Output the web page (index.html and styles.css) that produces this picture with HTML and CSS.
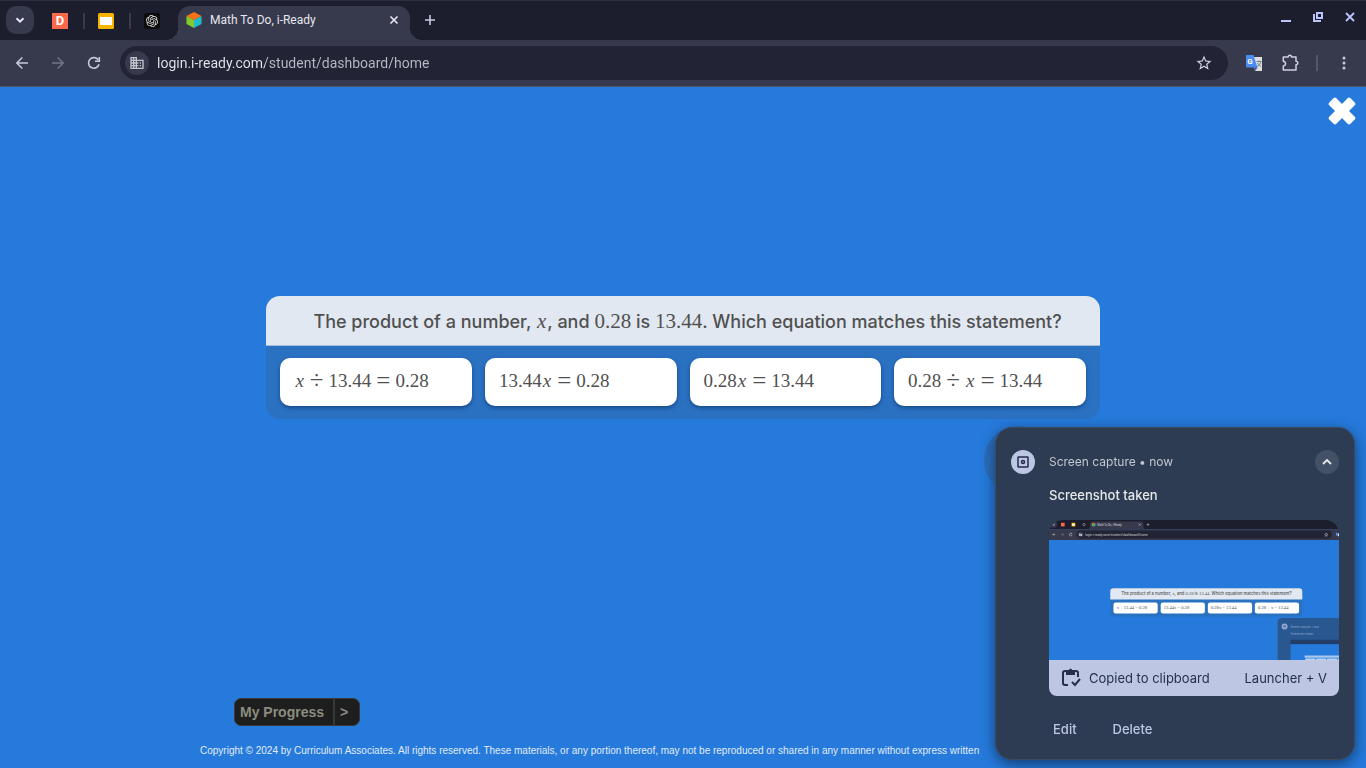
FILE: index.html
```html
<!DOCTYPE html>
<html lang="en">
<head>
<meta charset="utf-8">
<title>Math To Do, i-Ready</title>
<link rel="stylesheet" href="styles.css">
</head>
<body>
<header class="browser">
  <div class="tabstrip">
    <button class="tab-search" aria-label="Search tabs"><svg width="12" height="12" viewBox="0 0 12 12" fill="none" stroke="#e4e5f5" stroke-width="2"><path d="M2.500 4.200 6 7.700l3.500-3.500"/></svg></button>
    <div class="pinned-tabs">
      <button class="pinned" aria-label="Pinned tab D"><span class="icon-d">D</span></button>
      <button class="pinned" aria-label="Slides"><svg width="16" height="16" viewBox="0 0 16 16"><rect width="16" height="16" rx="1.500" fill="#f5b400"/><rect x="2" y="4" width="12" height="8" fill="#fff"/></svg></button>
      <button class="pinned" aria-label="Chat"><svg width="16" height="16" viewBox="-4 -4 32 32"><rect x="-4" y="-4" width="32" height="32" rx="6" fill="#0c0c0e"/><path fill="#e8e8e8" d="M22.2819 9.8211a5.9847 5.9847 0 0 0-.5157-4.9108 6.0462 6.0462 0 0 0-6.5098-2.9A6.0651 6.0651 0 0 0 4.9807 4.1818a5.9847 5.9847 0 0 0-3.9977 2.9 6.0462 6.0462 0 0 0 .7427 7.0966 5.98 5.98 0 0 0 .511 4.9107 6.051 6.051 0 0 0 6.5146 2.9001A5.9847 5.9847 0 0 0 13.2599 24a6.0557 6.0557 0 0 0 5.7718-4.2058 5.9894 5.9894 0 0 0 3.9977-2.9001 6.0557 6.0557 0 0 0-.7475-7.0729zm-9.022 12.6081a4.4755 4.4755 0 0 1-2.8764-1.0408l.1419-.0804 4.7783-2.7582a.7948.7948 0 0 0 .3927-.6813v-6.7369l2.02 1.1686a.071.071 0 0 1 .038.052v5.5826a4.504 4.504 0 0 1-4.4945 4.4944zm-9.6607-4.1254a4.4708 4.4708 0 0 1-.5346-3.0137l.142.0852 4.783 2.7582a.7712.7712 0 0 0 .7806 0l5.8428-3.3685v2.3324a.0804.0804 0 0 1-.0332.0615L9.74 19.9502a4.4992 4.4992 0 0 1-6.1408-1.6464zM2.3408 7.8956a4.485 4.485 0 0 1 2.3655-1.9728V11.6a.7664.7664 0 0 0 .3879.6765l5.8144 3.3543-2.0201 1.1685a.0757.0757 0 0 1-.071 0l-4.8303-2.7865A4.504 4.504 0 0 1 2.3408 7.872zm16.5963 3.8558L13.1038 8.364 15.1192 7.2a.0757.0757 0 0 1 .071 0l4.8303 2.7913a4.4944 4.4944 0 0 1-.6765 8.1042v-5.6772a.79.79 0 0 0-.407-.667zm2.0107-3.0231l-.142-.0852-4.7735-2.7818a.7759.7759 0 0 0-.7854 0L9.409 9.2297V6.8974a.0662.0662 0 0 1 .0284-.0615l4.8303-2.7866a4.4992 4.4992 0 0 1 6.6802 4.66zM8.3065 12.863l-2.02-1.1638a.0804.0804 0 0 1-.038-.0567V6.0742a4.4992 4.4992 0 0 1 7.3757-3.4537l-.142.0805L8.704 5.459a.7948.7948 0 0 0-.3927.6813zm1.0976-2.3654l2.602-1.4998 2.6069 1.4998v2.9994l-2.5974 1.4997-2.6067-1.4997Z"/></svg></button>
    </div>
    <div class="tab">
      <svg width="16" height="16" viewBox="0 0 16 16"><path d="M8 0l7.500 4L8 8.200.500 4z" fill="#f97316"/><path d="M.500 4 8 8.200V16L.500 12z" fill="#84cc2c"/><path d="M15.500 4 8 8.200V16l7.500-4z" fill="#1cbccb"/></svg>
      <span class="tab-title">Math To Do, i-Ready</span>
      <button class="tab-close" aria-label="Close tab"><svg width="16" height="16" viewBox="0 0 16 16" stroke="#e4e5f0" stroke-width="1.700"><path d="m4.500 4.500 7 7m0-7-7 7"/></svg></button>
    </div>
    <button class="new-tab" aria-label="New tab"><svg width="12" height="12" viewBox="0 0 12 12" stroke="#c8cae0" stroke-width="1.600"><path d="M6 1v10M1 6h10"/></svg></button>
    <div class="window-controls">
      <button aria-label="Minimize"><svg width="16" height="16" viewBox="0 0 16 16"><path fill="#bcc5fb" d="M3 11h10v2H3z"/></svg></button>
      <button aria-label="Restore"><svg width="16" height="16" viewBox="0 0 16 16" fill="none" stroke="#bcc5fb" stroke-width="2"><path d="M7 4h5v5H7zM4 5v7h7"/></svg></button>
      <button aria-label="Close"><svg width="16" height="16" viewBox="0 0 16 16" stroke="#bcc5fb" stroke-width="1.800"><path d="m4 4 8 8m0-8-8 8"/></svg></button>
    </div>
  </div>
  <div class="toolbar">
    <nav class="nav-buttons">
      <button aria-label="Back"><svg width="16" height="16" viewBox="0 0 16 16" fill="none" stroke="#c8cae0" stroke-width="1.500"><path d="M14 8H3m5.300-5.500L2.800 8l5.500 5.500"/></svg></button>
      <button aria-label="Forward"><svg width="16" height="16" viewBox="0 0 16 16" fill="none" stroke="#71758a" stroke-width="1.500"><path d="M2 8h11M7.700 2.500 13.200 8l-5.500 5.500"/></svg></button>
      <button aria-label="Reload"><svg width="16" height="16" viewBox="0 0 16 16" fill="none" stroke="#c8cae0" stroke-width="1.600"><path d="M13 9.200A5.300 5.300 0 1 1 12.300 5"/><path d="M13.300 2v4.200H9"/></svg></button>
    </nav>
    <div class="omnibox">
      <button class="site-info" aria-label="Site information"><svg width="16" height="16" viewBox="0 0 24 24" fill="#c3c4cc"><path d="M12 7V3H2v18h20V7H12zM6 19H4v-2h2v2zm0-4H4v-2h2v2zm0-4H4V9h2v2zm0-4H4V5h2v2zm4 12H8v-2h2v2zm0-4H8v-2h2v2zm0-4H8V9h2v2zm0-4H8V5h2v2zm10 12h-8v-2h2v-2h-2v-2h2v-2h-2V9h8v10zm-2-8h-2v2h2v-2zm0 4h-2v2h2v-2z"/></svg></button>
      <input class="address" type="text" aria-label="Address" value="login.i-ready.com/student/dashboard/home">
      <button class="bookmark" aria-label="Bookmark this tab"><svg width="18" height="18" viewBox="0 0 24 24" fill="#cfd0dc"><path d="m22 9.240-7.190-.620L12 2 9.190 8.630 2 9.240l5.460 4.730L5.820 21 12 17.270 18.180 21l-1.630-7.030L22 9.240zM12 15.400l-3.760 2.270 1-4.280-3.320-2.880 4.380-.380L12 6.100l1.710 4.040 4.380.380-3.320 2.880 1 4.280L12 15.400z"/></svg></button>
    </div>
    <div class="extensions">
      <button aria-label="Translate"><svg width="18" height="18" viewBox="0 0 18 18"><path d="M8 3h9v14h-7z" fill="#dfe0dc"/><path d="M11.500 7.500h5m-2.500-1v1m1.800 0c-.5 2.500-2 4-3.800 5m.500-3.500c1 1.500 2 2.500 3.500 3.500" stroke="#69818a" fill="none"/><path d="m9.500 13 3 0-2 4z" fill="#3155c8"/><path d="M1 1h7.500l4 12.500H2a1 1 0 0 1-1-1z" fill="#4b8af0"/><text x="2.300" y="10.300" class="icon-g">G</text></svg></button>
      <button aria-label="Extensions"><svg width="20" height="20" viewBox="0 0 20 20" fill="none" stroke="#cfd0e4" stroke-width="1.500" stroke-linejoin="round"><path d="M4 4h4.200c0-2.500 3.300-2.500 3.300 0H16v4.300c2.500.200 2.500 3.400 0 3.500V17H3.300v-4c3-.300 3-4.500 0-4.800V4z"/></svg></button>
      <span class="divider"></span>
      <button aria-label="Menu"><svg width="16" height="16" viewBox="0 0 16 16" fill="#c8cae0"><circle cx="8" cy="3" r="1.500"/><circle cx="8" cy="8" r="1.500"/><circle cx="8" cy="13" r="1.500"/></svg></button>
    </div>
  </div>
</header>

<main class="lesson">
  <button class="lesson-close" aria-label="Close lesson"><svg width="28" height="28" viewBox="-14 -14 28 28" fill="#fff"><rect x="-15" y="-5" width="30" height="10" rx="2" transform="rotate(45)"/><rect x="-15" y="-5" width="30" height="10" rx="2" transform="rotate(-45)"/></svg></button>
  <section class="question">
    <h1 class="prompt">The product of a number, <i class="math">x</i>, and <span class="math">0.28</span> is <span class="math">13.44</span>. Which equation matches this statement?</h1>
    <div class="answers">
      <button class="answer"><i>x</i><span class="op">÷</span>13.44<span class="op">=</span>0.28</button>
      <button class="answer">13.44<i>x</i><span class="op">=</span>0.28</button>
      <button class="answer">0.28<i>x</i><span class="op">=</span>13.44</button>
      <button class="answer">0.28<span class="op">÷</span><i>x</i><span class="op">=</span>13.44</button>
    </div>
  </section>
  <footer class="lesson-footer">
    <button class="progress"><span class="progress-label">My Progress</span><span class="progress-arrow">&gt;</span></button>
    <p class="copyright">Copyright © 2024 by Curriculum Associates. All rights reserved. These materials, or any portion thereof, may not be reproduced or shared in any manner without express written</p>
  </footer>
</main>

<aside class="notification">
  <div class="notice-head">
    <span class="app-icon"><svg width="14" height="14" viewBox="0 0 14 14" fill="none" stroke="#232c49" stroke-width="1.500"><rect x="2" y="2" width="10" height="10" rx=".500"/><circle cx="7" cy="7" r="1.500"/></svg></span>
    <span class="source">Screen capture • now</span>
    <button class="collapse" aria-label="Collapse"><svg width="12" height="12" viewBox="0 0 12 12" fill="none" stroke="#e8eaf2" stroke-width="1.800"><path d="M2 8l4-4 4 4"/></svg></button>
  </div>
  <div class="notice-body">
    <h2 class="notice-title">Screenshot taken</h2>
    <div class="preview">
      <svg class="thumbnail" viewBox="0 0 1260 608" preserveAspectRatio="xMinYMin slice">
        <rect width="1366" height="768" fill="#267adb"/>
        <rect width="1366" height="40" fill="#1c1e2e"/>
        <rect y="40" width="1366" height="47" fill="#373a4c"/>
        <path d="M168 40q10 0 10-12V18q0-12 12-12h208q12 0 12 12v10q0 12 10 12z" fill="#373a4c"/>
        <rect x="6" y="6" width="28" height="28" rx="10" fill="#373a4c"/>
        <path d="m15 18 5 5 5-5" stroke="#fff" stroke-width="3" fill="none"/>
        <rect x="52" y="12" width="16" height="16" fill="#f9684a"/>
        <rect x="98" y="12" width="16" height="16" fill="#f5b400"/><rect x="100" y="16" width="12" height="8" fill="#fff"/>
        <circle cx="152" cy="20" r="5" fill="none" stroke="#999" stroke-width="3"/>
        <path d="m194 12 8 4-8 4-8-4z" fill="#f97316"/><path d="m186 16 8 4v8l-8-4z" fill="#84cc2c"/><path d="m202 16-8 4v8l8-4z" fill="#1cbccb"/>
        <text x="210" y="24" class="thumb-tab">Math To Do, i-Ready</text>
        <path d="m390 16 8 8m0-8-8 8M424 20h12m-6-6v12" stroke="#ddd" stroke-width="2"/>
        <path d="M28 63H16m5-5-5 5 5 5" stroke="#ddd" stroke-width="2" fill="none"/><path d="M52 63h12m-5-5 5 5-5 5" stroke="#888" stroke-width="2" fill="none"/>
        <path d="M100 64a6 6 0 1 1-2-5m1-4v5h-5" stroke="#ddd" stroke-width="2" fill="none"/>
        <rect x="120" y="46" width="1108" height="34" rx="17" fill="#222435"/>
        <circle cx="137" cy="63" r="12" fill="#373a4c"/><path d="M131 57h6v12h-6zM138 61h6v8h-6z" fill="#c3c4cc"/>
        <text x="157" y="68" class="thumb-url">login.i-ready.com/student/dashboard/home</text>
        <path d="m1204 56 2 5 5 1-4 3 1 6-4-3-4 3 1-6-4-3 5-1z" fill="none" stroke="#ccc" stroke-width="2"/>
        <path d="M1246 56h9v12h-9z" fill="#4b8af0"/><path d="M1255 59h7v12h-7z" fill="#ddd"/>
        <rect x="266" y="296" width="834" height="123" rx="14" fill="#2b71c2"/>
        <path d="M266 345v-35q0-14 14-14h806q14 0 14 14v35z" fill="#e1e8f1"/>
        <text x="314" y="327" class="thumb-question">The product of a number, <tspan class="thumb-math">x</tspan>, and <tspan class="thumb-math">0.28</tspan> is <tspan class="thumb-math">13.44</tspan>. Which equation matches this statement?</text>
        <g fill="#fff"><rect x="280" y="358" width="192" height="48" rx="10"/><rect x="485" y="358" width="192" height="48" rx="10"/><rect x="690" y="358" width="192" height="48" rx="10"/><rect x="894" y="358" width="192" height="48" rx="10"/></g>
        <g class="thumb-math"><text x="294" y="387">x ÷ 13.44 = 0.28</text><text x="498" y="387">13.44x = 0.28</text><text x="703" y="387">0.28x = 13.44</text><text x="908" y="387">0.28 ÷ x = 13.44</text></g>
        <rect x="993" y="426" width="361" height="334" rx="18" fill="#29578f"/>
        <circle cx="1023" cy="462" r="13" fill="#91a8cf"/><circle cx="1023" cy="462" r="4" fill="none" stroke="#29578f" stroke-width="3"/>
        <g class="thumb-notice"><text x="1049" y="467">Screen capture • now</text><text x="1049" y="499">Screenshot taken</text></g>
        <path d="M1049 520h290v20h-290z" fill="#223d68"/><path d="M1049 540h290v120h-290z" fill="#267adb"/>
        <path d="M1110 588h192v10h-192z" fill="#a9c8ec"/><path d="M1113 602h44v10h-44zM1160 602h44v10h-44zM1207 602h44v10h-44zM1254 602h44v10h-44z" fill="#bcd5f4"/>
      </svg>
      <div class="copied"><svg width="20" height="20" viewBox="0 0 20 20" fill="none" stroke="#25304a" stroke-width="2"><path d="M7 17H4q-2 0-2-2V5q0-2 2-2h11q2 0 2 2v4M11 14l3 3 5-6"/><path d="M5 3h2.500Q8 .500 9.500.500T11.500 3H14v4H5z" fill="#25304a" stroke="none"/></svg><span>Copied to clipboard</span><span class="shortcut">Launcher + V</span></div>
    </div>
    <div class="notice-actions"><button>Edit</button><button>Delete</button></div>
  </div>
</aside>
</body>
</html>
```
FILE: styles.css
```css
* { box-sizing: border-box; }

body {
  display: flex;
  flex-direction: column;
  min-height: 100vh;
  margin: 0;
  overflow: hidden;
  background: #267adb;
  font-family: Roboto, "Liberation Sans", sans-serif;
}

button {
  display: flex;
  align-items: center;
  justify-content: center;
  padding: 0;
  border: 0;
  background: none;
  color: inherit;
  font: inherit;
}

svg { flex: none; }

/* Browser frame */
.tabstrip {
  display: flex;
  height: 40px;
  padding-left: 6px;
  border-top: 1px solid #2b2e3f;
  background: #1c1e2e;
}

.tab-search {
  width: 28px;
  height: 28px;
  margin-top: 5px;
  border-radius: 10px;
  background: #373a4c;
}

.pinned-tabs {
  display: flex;
  align-items: center;
  margin: 0 3px;
}

.pinned {
  width: 46px;
  height: 16px;
}

.pinned + .pinned {
  padding-right: 2px;
  border-left: 2px solid #373a4c;
}

.icon-d {
  width: 16px;
  height: 16px;
  background: #f9684a;
  color: #fff;
  font-size: 13px;
  font-weight: 700;
  line-height: 16px;
}

.tab {
  position: relative;
  display: flex;
  align-items: center;
  gap: 8px;
  width: 232px;
  margin-top: 5px;
  padding: 0 8px 6px;
  border-radius: 12px 12px 0 0;
  background: #373a4c;
}

.tab::before,
.tab::after {
  content: "";
  position: absolute;
  bottom: 0;
  width: 12px;
  height: 12px;
}

.tab::before {
  right: 100%;
  background: radial-gradient(circle at 0 0, #1c1e2e 12px, #373a4c 12px);
}

.tab::after {
  left: 100%;
  background: radial-gradient(circle at 100% 0, #1c1e2e 12px, #373a4c 12px);
}

.tab-title {
  flex: 1;
  color: #e6e7f0;
  font-size: 12px;
  line-height: 16px;
  white-space: nowrap;
}

.new-tab {
  width: 28px;
  height: 28px;
  margin: 5px 0 0 6px;
}

.window-controls {
  display: flex;
  height: 32px;
  margin-left: auto;
}

.window-controls button { width: 32px; }

.toolbar {
  display: flex;
  gap: 8px;
  height: 47px;
  padding: 6px 4px;
  border-bottom: 1px solid #4d566b;
  background: #373a4c;
}

.nav-buttons,
.extensions {
  display: flex;
  align-items: center;
}

.nav-buttons button,
.extensions button {
  width: 36px;
  height: 34px;
}

.divider {
  width: 2px;
  height: 16px;
  margin: 0 8px;
  background: #54586c;
}

.icon-g {
  fill: #fff;
  font-size: 8px;
  font-weight: 700;
}

.omnibox {
  display: flex;
  flex: 1;
  align-items: center;
  gap: 8px;
  padding: 0 15px 0 5px;
  border-radius: 17px;
  background: #222435;
}

.site-info {
  width: 24px;
  height: 24px;
  border-radius: 50%;
  background: #373a4c;
}

.address {
  flex: 1;
  min-width: 0;
  height: 20px;
  padding: 0;
  border: 0;
  outline: 0;
  background: linear-gradient(90deg, #e6e7f0 108px, #b9bac5 108px);
  background-clip: text;
  -webkit-background-clip: text;
  color: transparent;
  font: 14px/20px Roboto, sans-serif;
}

/* Lesson */
.lesson {
  position: relative;
  display: flex;
  flex: 1;
  flex-direction: column;
  align-items: center;
  justify-content: space-between;
  gap: 32px;
  padding-top: 209px;
}

/* Round floating button, mostly covered by the notification */
.lesson::after {
  content: "";
  position: absolute;
  right: 314px;
  bottom: 274px;
  width: 68px;
  height: 68px;
  border-radius: 50%;
  background: #2b6cb8;
}

.lesson-close {
  position: absolute;
  top: 10px;
  right: 10px;
}

.question {
  width: 61%;
  border-radius: 14px;
  background: #2b71c2;
}

.prompt {
  margin: 0;
  padding: 11px 20px 9px 47px;
  border-bottom: 1px solid #a5bedc;
  border-radius: 14px 14px 0 0;
  background: #e1e8f1;
  color: #505050;
  font: 500 18px/29px Inter, "Open Sans", sans-serif;
  white-space: nowrap;
}

.math {
  font-family: "Liberation Serif", serif;
  font-size: 21px;
  font-weight: 400;
  line-height: 20px;
}

i.math { padding: 0 1px; }

.answers {
  display: grid;
  grid-template-columns: repeat(4, 1fr);
  gap: 13px;
  padding: 12px 14px 13px;
}

.answer {
  justify-content: flex-start;
  height: 48px;
  padding: 0 14px 2px;
  border-radius: 10px;
  background: #fff;
  box-shadow: 0 2px 4px #174b86;
  color: #505050;
  font: 19px/24px "Liberation Serif", serif;
}

.answer i { padding: 0 1px; }

.op {
  padding: 0 5px;
  font-size: 25px;
}

.lesson-footer {
  width: 100%;
  padding: 0 200px 11px;
}

.progress {
  height: 28px;
  margin: 0 34px 19px;
  border: 1px solid #383838;
  border-radius: 7px;
  background: #1e1e1e;
  color: #8b8d80;
  font: 700 14px/26px "Liberation Sans", sans-serif;
}

.progress-label {
  padding: 0 9px 0 5px;
  border-right: 2px solid #383838;
}

.progress-arrow { padding: 0 11px 0 5px; }

.copyright {
  margin: 0;
  color: #e0ebf8;
  font: 10px/12px "Liberation Sans", sans-serif;
  white-space: nowrap;
}

/* Screen capture notification */
.notification {
  position: fixed;
  right: 11px;
  bottom: 8px;
  width: 360px;
  padding: 22px 15px;
  border: 1px solid #3d4a5d;
  border-radius: 17px;
  background: #2d3c52;
  box-shadow: 0 4px 14px #123d71;
  color: #c3c7cf;
  font: 12px/16px Inter, Roboto, sans-serif;
}

.notice-head {
  display: flex;
  align-items: center;
  gap: 14px;
}

.app-icon,
.collapse {
  display: flex;
  align-items: center;
  justify-content: center;
  width: 24px;
  height: 24px;
  border-radius: 50%;
}

.app-icon { background: #bdc7e4; }

.source { flex: 1; }

.collapse { background: #435166; }

.notice-body { padding-left: 38px; }

.notice-title {
  margin: 13px 0 17px;
  color: #e7e8ec;
  font-size: 13px;
  font-weight: 500;
  line-height: 16px;
}

.preview {
  overflow: hidden;
  border-radius: 14px 14px 8px 8px;
}

.thumbnail {
  display: block;
  width: 100%;
  height: 140px;
}

.copied {
  display: flex;
  align-items: center;
  gap: 8px;
  height: 36px;
  padding: 0 12px;
  background: #bdc7e4;
  color: #25304a;
  font-size: 13px;
}

.shortcut { margin-left: auto; }

.notice-actions {
  display: flex;
  gap: 36px;
  margin-top: 25px;
  padding-left: 4px;
  color: #bdc7e4;
  font-size: 13px;
  font-weight: 500;
}

/* Thumbnail lettering */
.thumb-tab { fill: #ddd; font: 12px Roboto, sans-serif; }
.thumb-url { fill: #ccc; font: 14px Roboto, sans-serif; }
.thumb-question { fill: #505050; font: 500 18px Inter, sans-serif; }
.thumb-math { fill: #505050; font: 20px "Liberation Serif", serif; }
.thumb-notice { fill: #8fa9cc; font: 12px Inter, sans-serif; }
```
